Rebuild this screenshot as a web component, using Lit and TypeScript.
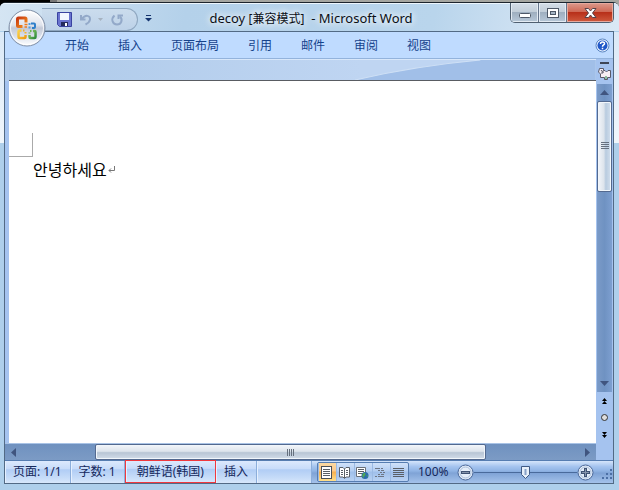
import { LitElement, html, svg, css } from "lit";
import { customElement, state } from "lit/decorators.js";

const TABS = ["开始", "插入", "页面布局", "引用", "邮件", "审阅", "视图"];

const lines = (ys: number[], x1 = 3, x2 = 13) =>
  svg`${ys.map((y) => svg`<path d="M${x1} ${y}.5H${x2}" stroke="#5a5f66"/>`)}`;

const page = svg`<rect x="2.5" y="1.5" width="10" height="12" fill="#fff" stroke="#4a4f58"/>${lines([4, 6, 8, 10], 4, 11)}`;

const VIEWS = [
  { name: "页面视图", icon: page },
  {
    name: "阅读版式",
    icon: svg`<path d="M7.500 4L6 2.500H2.500V12H6L7.500 13.500L9 12H12.500V2.500H9Z" fill="#fff" stroke="#5a5f66"/><path d="M7.500 4V13M4 5.500H6M4 7.500H6M4 9.500H6M9 5.500H11M9 7.500H11M9 9.500H11" stroke="#5a5f66"/>`,
  },
  {
    name: "Web 版式",
    icon: svg`<path d="M1.500 2.500H10.500V11.500H1.500Z" fill="#fff" stroke="#6a6f78"/>${lines([4, 6, 8], 3, 9)}<circle cx="10" cy="10.500" r="3.500" fill="#2c6cae"/><path d="M8 8.500C9 7 11 8 10.500 9.500S9 11 8.500 13C7 11.500 7 10 8 8.500M11.500 10L13 10.500L12 12.500Z" fill="#4fa656"/>`,
  },
  {
    name: "大纲视图",
    icon: svg`<path d="M2 3.500H7M8 3.500H10M5 5.500H7M8 5.500H11M7 7.500H9M10 7.500H12M5 9.500H7M8 9.500H11M2 11.500H4M5 11.500H11" stroke="#6d7584"/>`,
  },
  { name: "普通视图", icon: svg`${lines([3, 5, 7, 9, 11], 2, 13)}` },
];

@customElement("app-root")
export class AppRoot extends LitElement {
  @state() private view = 0;

  static styles = css`
    :host {
      display: block;
      font: 12px/16px "Noto Sans", "Noto Sans CJK SC", sans-serif;
      color: #15285c;
    }
    * { box-sizing: border-box; }
    button {
      font: inherit;
      color: inherit;
      border: 0;
      padding: 0;
      margin: 0;
      background: none;
      display: flex;
      align-items: center;
      justify-content: center;
    }
    svg { display: block; flex: none; }
    .desktop {
      min-height: 100vh;
      display: flex;
      flex-direction: column;
      padding-top: 2px;
      background: linear-gradient(90deg, #000 50px, #777 50px, #777 57px, #a5a6a1 57px);
    }
    .window {
      flex: 1;
      display: flex;
      flex-direction: column;
      border-top: 1px solid #1c242d;
      border-radius: 6px 6px 0 0;
      padding: 0 5px 6px 4px;
      background:
        linear-gradient(#dbe9f7, #f0f6fc) 0 29px / 100% 111px no-repeat,
        #aecfeb;
    }
    .title {
      height: 28px;
      margin: 0 -5px 0 -4px;
      display: flex;
      align-items: flex-start;
      border-top: 1px solid #edf6fd;
      border-radius: 5px 5px 0 0;
      background: linear-gradient(100deg, #d5e5f3, #b4d1ea 30%, #b9d5ec 70%, #cfe1f2 85%, #dae8f5);
    }
    .office {
      position: relative;
      z-index: 2;
      margin: 5px 0 0 8px;
      height: 38px;
      width: 38px;
    }
    .quick {
      height: 23px;
      width: 96px;
      margin: 4px 0 0 -4px;
      padding-left: 15px;
      gap: 6px;
      display: flex;
      align-items: center;
      border: 1px solid #8ea6bf;
      border-left: 0;
      border-radius: 0 12px 12px 0;
      background: linear-gradient(#cbdced, #bdd2e8);
    }
    .more { width: 20px; height: 28px; }
    h1 {
      flex: 1;
      margin: 0;
      padding-right: 46px;
      font: 13px/29px "Noto Sans", "Noto Sans CJK SC", sans-serif;
      color: #0b0f16;
      text-align: center;
      text-shadow: 0 0 6px #fff, 0 0 8px #fff;
      white-space: nowrap;
    }
    h1 span { font-size: 12px; }
    .caption {
      display: flex;
      height: 20px;
      margin-right: 5px;
      margin-top: -1px;
      border: 1px solid #4f5f70;
      border-top: 0;
      border-radius: 0 0 5px 5px;
      overflow: hidden;
    }
    .caption button {
      width: 28px;
      height: 19px;
      border-right: 1px solid #64748a;
      background: linear-gradient(#d5dee8, #c2ced9 45%, #9fafc0 50%, #b7c8d8);
      box-shadow: inset 0 0 0 1px #e3ebf3;
    }
    .caption .close {
      width: 46px;
      border: 0;
      background: linear-gradient(#dc9a8d, #cf6a57 45%, #b8301a 50%, #cf5a3e);
      box-shadow: inset 0 0 0 1px #e6aa9e;
    }
    .client {
      flex: 1;
      display: flex;
      flex-direction: column;
      border: 1px solid #526a85;
    }
    .tabs {
      height: 27px;
      display: flex;
      align-items: center;
      gap: 29px;
      padding: 1px 3px 0 60px;
      background: #bfdbff;
      border-bottom: 1px solid #93b3dc;
      color: #15428b;
    }
    .tabs button { white-space: nowrap; }
    .tabs .help { margin-left: auto; }
    .body {
      flex: 1;
      display: flex;
      background: #a5c3ef;
    }
    .work {
      flex: 1;
      min-width: 0;
      display: flex;
      flex-direction: column;
    }
    .band {
      height: 22px;
      border-top: 1px solid #d8e7fa;
      border-bottom: 1px solid #595c62;
      margin-left: 4px;
      box-shadow: -4px 0 #b1cbea;
      background: linear-gradient(90deg, #aecae9, #bfd5f2 60%);
    }
    .band svg { margin-left: auto; width: 41%; height: 20px; }
    .paper {
      flex: 1;
      margin-left: 4px;
      background: #fff;
      color: #000;
    }
    .corner {
      width: 24px;
      height: 24px;
      margin-top: 52px;
      border: solid #aaa;
      border-width: 0 1px 1px 0;
    }
    .paper p {
      margin: 0 24px;
      display: flex;
      align-items: center;
      font: 16px/24px "Noto Sans CJK KR", sans-serif;
    }
    .hscroll {
      height: 17px;
      display: flex;
      background: linear-gradient(#6f91bf, #7c9bc5);
      border-top: 1px solid #a9c3e6;
    }
    .hscroll button { width: 17px; }
    .before { flex: 73; }
    .after { flex: 93; }
    .thumb {
      flex: 391;
      display: flex;
      align-items: center;
      justify-content: center;
      border: 1px solid #53698f;
      border-radius: 2px;
      background: linear-gradient(#f3f6fa, #dde4ec 45%, #b8c5d5 55%, #d3dde9);
      box-shadow: inset 0 0 0 1px #f1f6fb;
    }
    .side {
      width: 17px;
      padding: 2px 0 17px;
      display: flex;
      flex-direction: column;
      align-items: center;
    }
    .split {
      width: 9px;
      height: 2px;
      background: #3e4656;
      margin-top: 1px;
    }
    .toggle { height: 20px; }
    .vscroll {
      flex: 1;
      width: 15px;
      display: flex;
      flex-direction: column;
      background: linear-gradient(90deg, #7b9bc8, #6f92c2 50%, #7d9fd0);
    }
    .vscroll button { height: 17px; }
    .vscroll .thumb {
      flex: 90;
      background: linear-gradient(90deg, #f3f6fa, #dde4ec 45%, #b8cbdf 60%, #d3e0ee);
    }
    .vscroll .after { flex: 186; }
    .side .jump { height: 17px; width: 15px; }
    .status {
      height: 23px;
      display: flex;
      align-items: stretch;
      border-top: 1px solid #567db1;
      background: linear-gradient(#d5e5fb, #a5c4ef 25%, #8fb3e4 45%, #7fa3d6 55%, #a4c2ea);
      white-space: nowrap;
    }
    .cell {
      display: flex;
      align-items: center;
      justify-content: center;
      border-right: 1px solid #8caedb;
      box-shadow: inset 1px 0 #e5f0ff;
      padding: 0 8px;
      background: linear-gradient(#dce9fd, #c8dcfa 35%, #b1cdf5 40%, #c5dbf8 75%, #d7e7fb);
    }
    .cell.marked {
      border: 1px solid #f0383e;
      margin-top: -1px;
      padding: 0 11px;
    }
    .cell.blank { width: 55px; }
    .views {
      display: flex;
      margin: 1px 9px 1px 5px;
      border: 1px solid #567db1;
      border-radius: 2px;
      background: linear-gradient(#d0e1f9, #b2cdf2 45%, #9fbfeb 50%, #b9d2f3);
    }
    .views button { width: 18px; box-shadow: inset 1px 0 #9bbae4; }
    .views button.on { background: linear-gradient(#fbd9a2, #fbc88a 45%, #f7b050 50%, #fee08c); }
    .zoom {
      flex: 1;
      display: flex;
      align-items: center;
      margin-left: 8px;
      min-width: 0;
    }
    input {
      appearance: none;
      flex: 1;
      min-width: 0;
      margin: 0;
      height: 15px;
      background: linear-gradient(#496a9b, #496a9b) 0 7px / 100% 1px no-repeat;
    }
    input::-webkit-slider-thumb {
      appearance: none;
      width: 11px;
      height: 15px;
      background: url("data:image/svg+xml,%3Csvg xmlns='http://www.w3.org/2000/svg' width='11' height='15'%3E%3Cpath d='M1.500 1.500H9.500V9.500L5.500 13.500L1.500 9.500Z' fill='%23e8f0fa' stroke='%23405a85'/%3E%3Cpath d='M5.500 4V10' stroke='%2389a2c8' stroke-width='2'/%3E%3C/svg%3E");
    }
    .grip { align-self: flex-end; margin: 0 0 3px 8px; }
  `;

  private arrow(d: string, w: number, h: number) {
    return html`<svg width=${w} height=${h}><path d=${d} fill="#40557f" /></svg>`;
  }

  private round(plus: boolean) {
    return html`<svg width="17" height="17">
      <circle cx="8.500" cy="8.500" r="7.500" fill="#e4edf9" stroke="#4a6798" />
      <circle cx="8.500" cy="8.500" r="5.500" fill="none" stroke="#a9bdd9" />
      <path d=${plus ? "M4 8.500H13M8.500 4V13" : "M4 8.500H13"} stroke="#3f5273" stroke-width="3" />
      <path d=${plus ? "M5 8.500H12M8.500 5V12" : "M5 8.500H12"} stroke="#8493ab" />
    </svg>`;
  }

  private officeLogo() {
    return html`<svg width="38" height="38" viewBox="0 0 38 38">
      <defs>
        <linearGradient id="orb" x2="0" y2="1">
          <stop offset="0" stop-color="#fff" /><stop offset=".42" stop-color="#dfe3ec" />
          <stop offset=".5" stop-color="#c3c9d7" /><stop offset=".75" stop-color="#dde3ee" /><stop offset="1" stop-color="#fff" />
        </linearGradient>
        <linearGradient id="red" x2="1" y2="1">
          <stop offset="0" stop-color="#c8370f" /><stop offset="1" stop-color="#f7941e" />
        </linearGradient>
        <linearGradient id="yellow" x2="1" y2="1">
          <stop offset="0" stop-color="#fbd24a" /><stop offset="1" stop-color="#ee9c12" />
        </linearGradient>
        <linearGradient id="green" x2="1" y2="1">
          <stop offset="0" stop-color="#8ccb5c" /><stop offset="1" stop-color="#2f8b3c" />
        </linearGradient>
      </defs>
      <circle cx="19" cy="19" r="18" fill="url(#orb)" stroke="#7e8ea6" />
      <circle cx="19" cy="19" r="16.500" fill="none" stroke="#fff" stroke-opacity=".8" />
      <g fill="none" stroke-linejoin="round">
        <path d="M14.500 17.500H10.500Q9.500 17.500 9.500 16.500V10Q9.500 9 10.500 9H17Q18 9 18 10V13.500" stroke="url(#red)" stroke-width="3" />
        <path d="M16.500 15.500H19.500M16.500 18H19" stroke="#f07c1c" stroke-width="1.500" />
        <path d="M23 14.500H26Q27 14.500 27 15.500V18Q27 19 26 19H24" stroke="#2f7fca" stroke-width="2" />
        <path d="M21.500 14V16M21.500 17.500V19.500" stroke="#4e9fe0" stroke-width="2" />
        <path d="M13.500 21.500H11.500Q10.500 21.500 10.500 22.500V28Q10.500 29 11.500 29H16.500Q17.500 29 17.500 28V26" stroke="url(#yellow)" stroke-width="2.500" />
        <path d="M15 21.500H16.500M17.500 23V24.500" stroke="#f3b12a" stroke-width="2" />
        <path d="M25 22H26.500Q27.500 22 27.500 23V28Q27.500 29 26.500 29H22.500Q21.500 29 21.500 28V26" stroke="url(#green)" stroke-width="2.500" />
        <path d="M22 22H23.500M21.500 23.500V24.500" stroke="#6bb84c" stroke-width="2" />
      </g>
    </svg>`;
  }

  render() {
    return html`<div class="desktop"><div class="window">
      <header class="title">
        <button class="office" aria-label="Office 按钮">${this.officeLogo()}</button>
        <div class="quick">
          <button aria-label="保存"><svg width="15" height="15">
            <path d="M.5 .5H14.500V14.500H2.500L.5 12.500Z" fill="#6a74cf" stroke="#3a43a0" />
            <path d="M3 1H12V8H3Z" fill="#f2f6ff" /><path d="M4 10H11V14H4Z" fill="#242b5c" /><path d="M8 11H10V14H8Z" fill="#fff" />
          </svg></button>
          <button aria-label="撤消"><svg width="26" height="15">
            <path d="M3 3V7.500H7.500" fill="none" stroke="#93a9c9" stroke-width="2" />
            <path d="M4 7C7 2.500 12.500 3 12 7.500C11.700 10 9.500 11.500 7.500 12.500" fill="none" stroke="#93a9c9" stroke-width="2" />
            <path d="M20 6H25L22.500 9Z" fill="#a6b2c0" />
          </svg></button>
          <button aria-label="恢复"><svg width="15" height="15">
            <path d="M4.500 3.500C.5 7 2.500 12.500 7 12.500S13 7.500 10 4.500" fill="none" stroke="#93a9c9" stroke-width="2" />
            <path d="M8.500 7V3.500H13" fill="none" stroke="#93a9c9" stroke-width="2" />
          </svg></button>
        </div>
        <button class="more" aria-label="自定义快速访问工具栏"><svg width="7" height="7"><path d="M1 .5H6" stroke="#15346e" /><path d="M0 3H7L3.500 6.500Z" fill="#15346e" /></svg></button>
        <h1>decoy <span>[兼容模式]</span> &nbsp;- Microsoft Word</h1>
        <div class="caption">
          <button aria-label="最小化"><svg width="12" height="12"><rect x=".5" y="6.500" width="11" height="4" rx="1" fill="#fff" stroke="#4e5867" /></svg></button>
          <button aria-label="最大化"><svg width="12" height="12"><rect x=".5" y="1.500" width="11" height="9" fill="#fff" stroke="#4e5867" /><rect x="3.500" y="4.500" width="5" height="3" fill="#a5b5c5" stroke="#4e5867" /></svg></button>
          <button class="close" aria-label="关闭"><svg width="13" height="12"><path d="M1 1.500H4.500L6.500 4L8.500 1.500H12L8.500 6L12 10.500H8.500L6.500 8L4.500 10.500H1L4.500 6Z" fill="#fff" stroke="#56434a" /></svg></button>
        </div>
      </header>
      <div class="client">
        <nav class="tabs">
          ${TABS.map((t) => html`<button>${t}</button>`)}
          <button class="help" aria-label="帮助"><svg width="15" height="15">
            <circle cx="7.500" cy="7.500" r="6.500" fill="#eaf3ff" stroke="#5b86c2" /><circle cx="7.500" cy="7.500" r="5" fill="#2058c8" />
            <path d="M5.500 6C5.500 3.500 9.500 3.500 9.500 5.700C9.500 7 7.500 7 7.500 8.700M7.500 9.700V11.200" fill="none" stroke="#fff" stroke-width="1.500" />
          </svg></button>
        </nav>
        <div class="body">
          <main class="work">
            <div class="band"><svg viewBox="0 0 240 20" preserveAspectRatio="none"><path d="M0 20Q60 6 125 0H240V20Z" fill="#a1bfe8" /><path d="M0 20Q60 6 125 0" fill="none" stroke="#cfe0f5" /></svg></div>
            <article class="paper" lang="ko">
              <div class="corner"></div>
              <p>안녕하세요<svg width="9" height="9"><path d="M7.500 1V5.500H2M4 3.500L2 5.500L4 7.500" fill="none" stroke="#777" /></svg></p>
            </article>
            <div class="hscroll">
              <button aria-label="向左">${this.arrow("M5 0V9L0 4.500Z", 5, 9)}</button>
              <span class="before"></span>
              <span class="thumb"><svg width="8" height="7"><path d="M.5 0V7M2.500 0V7M4.500 0V7M6.500 0V7" stroke="#66707e" /></svg></span>
              <span class="after"></span>
              <button aria-label="向右">${this.arrow("M0 0V9L5 4.500Z", 5, 9)}</button>
            </div>
          </main>
          <aside class="side">
            <span class="split"></span>
            <button class="toggle" aria-label="标尺"><svg width="13" height="12">
              <path d="M1.500 .5H5.500V2.500H7L8.500 4L10 2.500H12.500V9.500H9.500V11.500H6.500V9.500H2.500V6L.5 4Z" fill="#f6eef4" stroke="#5a5a68" /><path d="M3 2L5 4.500M5 2.500V5H3" stroke="#5a5a68" fill="none" /><path d="M7 8H9V11H7Z" fill="#8fbf9f" />
            </svg></button>
            <div class="vscroll">
              <button aria-label="向上">${this.arrow("M0 5H9L4.500 0Z", 9, 5)}</button>
              <span class="thumb"><svg width="8" height="8"><path d="M0 .5H8M0 2.500H8M0 4.500H8M0 6.500H8" stroke="#66707e" /></svg></span>
              <span class="after"></span>
              <button aria-label="向下">${this.arrow("M0 0H9L4.500 5Z", 9, 5)}</button>
            </div>
            <button class="jump" aria-label="前一页"><svg width="5" height="6"><path d="M2.500 0L5 3H0ZM2.500 3L5 6H0Z" fill="#000" /></svg></button>
            <button class="jump" aria-label="选择浏览对象"><svg width="7" height="7"><circle cx="3.500" cy="3.500" r="3" fill="#ddd" stroke="#333" /></svg></button>
            <button class="jump" aria-label="下一页"><svg width="5" height="6"><path d="M0 0H5L2.500 3ZM0 3H5L2.500 6Z" fill="#000" /></svg></button>
          </aside>
        </div>
        <footer class="status">
          <button class="cell">页面: 1/1</button>
          <button class="cell">字数: 1</button>
          <button class="cell marked">朝鲜语(韩国)</button>
          <button class="cell">插入</button>
          <span class="cell blank"></span>
          <div class="views">
            ${VIEWS.map((v, i) => html`<button class=${i === this.view ? "on" : ""} aria-label=${v.name} @click=${() => (this.view = i)}><svg width="15" height="15">${v.icon}</svg></button>`)}
          </div>
          <button>100%</button>
          <div class="zoom">
            <button aria-label="缩小">${this.round(false)}</button>
            <input type="range" min="0" max="100" value="50" aria-label="显示比例" />
            <button aria-label="放大">${this.round(true)}</button>
          </div>
          <svg class="grip" width="11" height="11"><path d="M8 0h2v2h-2zM4 4h2v2h-2zM8 4h2v2h-2zM0 8h2v2h-2zM4 8h2v2h-2zM8 8h2v2h-2z" fill="#4c70a6" /></svg>
        </footer>
      </div>
    </div></div>`;
  }
}
